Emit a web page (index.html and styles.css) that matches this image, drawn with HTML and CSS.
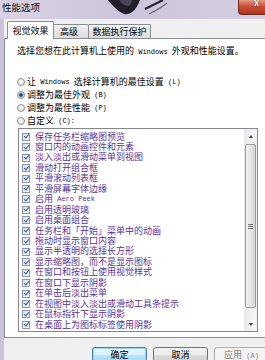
FILE: index.html
```html
<!DOCTYPE html>
<html lang="zh-CN">
  <head>
    <meta charset="UTF-8" />
    <meta name="viewport" content="width=device-width, initial-scale=1.0" />
    <title>性能选项</title>
    <link rel="stylesheet" href="styles.css">
  </head>
  <body>
    <div class="window">
      <!-- Title bar -->
      <div class="window__titlebar">
        <span class="window__title">性能选项</span>
        <svg class="window__art" width="70" height="19" viewBox="0 0 70 19">
          <path d="M3 0 C7 5 12 11 19 14 C24 15 28 12 31 8 C33 5 34 2 35 0 Z" fill="#221d2a" />
          <path d="M14 0 C16 3 20 6 24 6 C26 4 27 2 27 0 Z" fill="#4a4256" />
          <path d="M40 9 C46 6 52 3 58 0" stroke="#2b2533" stroke-width="2.2" fill="none" />
          <path d="M44 14 C50 11 56 8 62 3" stroke="#6c6478" stroke-width="1.2" fill="none" />
        </svg>
        <span class="window__close">x</span>
      </div>

      <div class="window__client">
        <!-- Tabs -->
        <div class="tabs">
          <div class="tabs__tab tabs__tab--active">视觉效果</div>
          <div class="tabs__tab tabs__tab--short">高级</div>
          <div class="tabs__tab tabs__tab--long">数据执行保护</div>
        </div>

        <!-- Tab page -->
        <div class="panel">
          <p class="panel__intro">选择您想在此计算机上使用的<span class="latin"> Windows </span>外观和性能设置。</p>

          <ul class="options">
            <li class="options__item"><span class="radio"></span>让<span class="latin"> Windows </span>选择计算机的最佳设置<span class="latin"> (L)</span></li>
            <li class="options__item"><span class="radio radio--checked"></span>调整为最佳外观<span class="latin"> (B)</span></li>
            <li class="options__item"><span class="radio"></span>调整为最佳性能<span class="latin"> (P)</span></li>
            <li class="options__item"><span class="radio"></span>自定义<span class="latin"> (C):</span></li>
          </ul>

          <div class="effects">
            <ul class="effects__list">
              <li class="effects__item"><span class="checkbox"></span>保存任务栏缩略图预览</li>
              <li class="effects__item"><span class="checkbox"></span>窗口内的动画控件和元素</li>
              <li class="effects__item"><span class="checkbox"></span>淡入淡出或滑动菜单到视图</li>
              <li class="effects__item"><span class="checkbox"></span>滑动打开组合框</li>
              <li class="effects__item"><span class="checkbox"></span>平滑滚动列表框</li>
              <li class="effects__item"><span class="checkbox"></span>平滑屏幕字体边缘</li>
              <li class="effects__item"><span class="checkbox"></span>启用<span class="latin"> Aero Peek</span></li>
              <li class="effects__item"><span class="checkbox"></span>启用透明玻璃</li>
              <li class="effects__item"><span class="checkbox"></span>启用桌面组合</li>
              <li class="effects__item"><span class="checkbox"></span>任务栏和「开始」菜单中的动画</li>
              <li class="effects__item"><span class="checkbox"></span>拖动时显示窗口内容</li>
              <li class="effects__item"><span class="checkbox"></span>显示半透明的选择长方形</li>
              <li class="effects__item"><span class="checkbox"></span>显示缩略图，而不是显示图标</li>
              <li class="effects__item"><span class="checkbox"></span>在窗口和按钮上使用视觉样式</li>
              <li class="effects__item"><span class="checkbox"></span>在窗口下显示阴影</li>
              <li class="effects__item"><span class="checkbox"></span>在单击后淡出菜单</li>
              <li class="effects__item"><span class="checkbox"></span>在视图中淡入淡出或滑动工具条提示</li>
              <li class="effects__item"><span class="checkbox"></span>在鼠标指针下显示阴影</li>
              <li class="effects__item"><span class="checkbox"></span>在桌面上为图标标签使用阴影</li>
            </ul>
            <div class="scrollbar">
              <div class="scrollbar__arrow scrollbar__arrow--up"></div>
              <div class="scrollbar__thumb"><span class="scrollbar__grip"></span></div>
              <div class="scrollbar__track"></div>
              <div class="scrollbar__arrow scrollbar__arrow--down"></div>
            </div>
          </div>
        </div>

        <!-- Dialog buttons -->
        <div class="buttons">
          <button class="button button--default">确定</button>
          <button class="button">取消</button>
          <button class="button button--disabled">应用<span class="latin"> (A)</span></button>
        </div>
      </div>
    </div>
  </body>
</html>
```

FILE: styles.css
```css
/* Khung cửa sổ */
body {
  margin: 0;
  width: 265px;
  height: 360px;
  overflow: hidden;
  background-color: #f0f0f0;
  font-family: "Noto Sans CJK SC", "Noto Sans", sans-serif;
  font-size: 9px;
  color: #000;
}

.latin {
  font-family: "Liberation Mono", "Noto Sans CJK SC", monospace;
  font-size: 7px;
  white-space: pre;
}

.window {
  width: 275px;
  height: 360px;
  display: flex;
  flex-direction: column;
}

.window__titlebar {
  position: relative;
  height: 19px;
  flex-shrink: 0;
  display: flex;
  align-items: flex-start;
  padding-left: 2px;
  background: linear-gradient(to right, #d9d2e4, #cdc4db 45%, #d6cfe2);
}

.window__title {
  font-size: 9.5px;
  line-height: 14px;
  color: #111;
}

.window__art {
  position: absolute;
  top: 0;
  left: 105px;
}

.window__close {
  margin-left: auto;
  width: 37px;
  height: 15px;
  box-sizing: border-box;
  border: 1px solid #6a2c22;
  border-top: none;
  border-radius: 0 0 0 4px;
  background: linear-gradient(#e49a86, #cc4f36 45%, #b0301c);
  color: #fff;
  font-family: "Liberation Sans", sans-serif;
  font-size: 10px;
  font-weight: bold;
  line-height: 6px;
  text-align: center;
  text-shadow: 0 0 2px #3a0a05;
}

.window__client {
  flex: 1;
  display: flex;
  flex-direction: column;
  padding-top: 3px;
  border-left: 4px solid #cbc3d9;
  background-color: #f0f0f0;
}

/* Tabs */
.tabs {
  position: relative;
  z-index: 1;
  height: 16px;
  display: flex;
  align-items: flex-end;
  padding-left: 3px;
}

.tabs__tab {
  height: 14px;
  box-sizing: border-box;
  display: flex;
  align-items: center;
  justify-content: center;
  margin-left: -1px;
  border: 1px solid #898c95;
  border-bottom: none;
  border-radius: 2px 2px 0 0;
  background: linear-gradient(#f4f4f4, #e6e6e6 50%, #dcdcdc);
  line-height: 12px;
}

.tabs__tab--active {
  position: relative;
  z-index: 2;
  width: 47px;
  height: 18px;
  margin-left: 0;
  margin-bottom: -1px;
  background: #fff;
}

.tabs__tab--short {
  width: 36px;
  padding-right: 4px;
}

.tabs__tab--long {
  width: 63px;
}

/* Trang tab */
.panel {
  height: 300px;
  box-sizing: border-box;
  padding: 6px 0 0 12px;
  border: 1px solid #898c95;
  background-color: #fff;
}

.panel__intro {
  margin: 0;
  line-height: 12px;
  white-space: nowrap;
}

.options {
  list-style: none;
  margin: 17px 0 0;
  padding: 0;
}

.options__item {
  height: 13px;
  display: flex;
  align-items: center;
  white-space: nowrap;
}

.radio {
  width: 8px;
  height: 8px;
  box-sizing: border-box;
  margin-right: 2px;
  border: 1px solid #8d8d8d;
  border-radius: 50%;
  background: radial-gradient(circle at 40% 40%, #fff, #dcdcdc);
}

.radio--checked {
  background: radial-gradient(circle, #1d3a6a 0, #2e5591 1.4px, #a9bdd8 2.2px, #eef2f7 3px);
}

/* Danh sách hiệu ứng */
.effects {
  width: 240px;
  height: 204px;
  box-sizing: border-box;
  margin: 1px 0 0 1px;
  display: flex;
  border: 1px solid #828790;
  background-color: #fff;
}

.effects__list {
  flex: 1;
  list-style: none;
  margin: 0;
  padding: 2.5px 0 0 3px;
  overflow: hidden;
}

.effects__item {
  height: 10.46px;
  display: flex;
  align-items: center;
  white-space: nowrap;
  line-height: 10.46px;
  color: #57339c;
}

.checkbox {
  position: relative;
  width: 8px;
  height: 8px;
  box-sizing: border-box;
  flex-shrink: 0;
  margin-right: 5px;
  border: 1px solid #8c98aa;
  background: linear-gradient(135deg, #d8dfe8, #f7f8fa);
}

.checkbox::after {
  content: "";
  position: absolute;
  left: 1.6px;
  top: -0.5px;
  width: 1.6px;
  height: 4px;
  border: solid #34589a;
  border-width: 0 1.4px 1.4px 0;
  transform: rotate(40deg);
}

/* Thanh cuộn */
.scrollbar {
  width: 13px;
  display: flex;
  flex-direction: column;
  background: linear-gradient(to right, #e9e9e9, #f6f6f6);
}

.scrollbar__arrow {
  display: flex;
  align-items: center;
  justify-content: center;
}

.scrollbar__arrow--up {
  height: 14px;
}

.scrollbar__arrow--down {
  height: 13px;
}

.scrollbar__arrow--up::after,
.scrollbar__arrow--down::after {
  content: "";
  border-left: 2.5px solid transparent;
  border-right: 2.5px solid transparent;
}

.scrollbar__arrow--up::after {
  border-bottom: 3px solid #4a4a4a;
}

.scrollbar__arrow--down::after {
  border-top: 3px solid #4a4a4a;
}

.scrollbar__thumb {
  height: 164px;
  box-sizing: border-box;
  margin: 1px 1px 0;
  display: flex;
  align-items: center;
  justify-content: center;
  border: 1px solid #9c9c9c;
  border-radius: 2px;
  background: linear-gradient(to right, #f4f4f4, #e4e4e4 50%, #d4d4d4);
}

.scrollbar__grip {
  width: 5px;
  height: 5px;
  background: repeating-linear-gradient(#6f6f6f 0 1px, transparent 1px 2px);
}

.scrollbar__track {
  flex: 1;
}

/* Nút hộp thoại */
.buttons {
  display: flex;
  gap: 6px;
  margin-top: 9px;
  padding-left: 88px;
}

.button {
  width: 55px;
  height: 15px;
  padding: 0;
  border: 1px solid #707070;
  border-radius: 3px;
  background: linear-gradient(#f2f2f2, #ebebeb 50%, #dddddd 51%, #cfcfcf);
  font-family: "Noto Sans CJK SC", sans-serif;
  font-size: 9px;
  line-height: 13px;
  color: #000;
}

.button--default {
  border-color: #3c7fb1;
  box-shadow: inset 0 0 0 1px #9fd6f4;
  background: linear-gradient(#eaf6fd, #d9f0fc 50%, #bee6fd 51%, #a7d9f5);
}

.button--disabled {
  border-color: #adb2b5;
  background: #f4f4f4;
  color: #838383;
}
```
